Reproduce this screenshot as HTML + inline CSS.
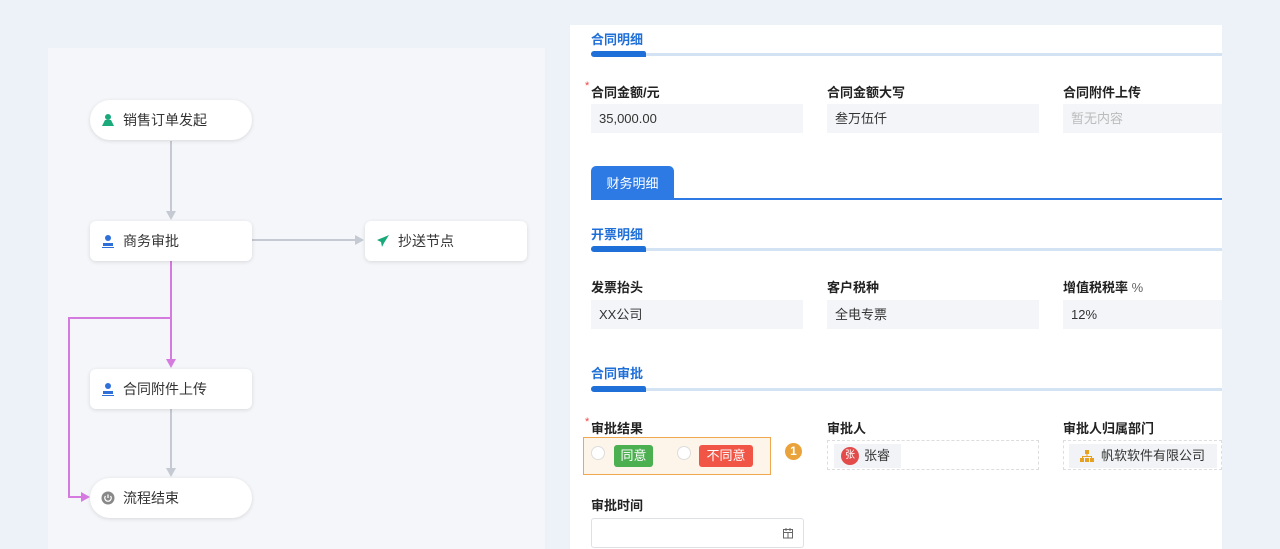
<!DOCTYPE html><html><head><meta charset="utf-8"><style>
*{margin:0;padding:0;box-sizing:border-box}
body{width:1280px;height:549px;overflow:hidden;background:#edf2f9;font-family:"Liberation Sans","Noto Sans CJK SC",sans-serif;position:relative;font-size:14px;color:#333}
.a{position:absolute}
.node{position:absolute;background:#fff;box-shadow:0 1px 4px rgba(0,0,0,.12);border-radius:6px;display:flex;align-items:center;padding-left:11px;font-size:14px;color:#333;width:162px;height:40px}
.node svg{margin-right:8px}
.pill{border-radius:20px}
.st{position:absolute;left:591px;color:#1f6fd8;font-weight:bold;font-size:13px}
.bar{position:absolute;left:591px;width:631px;height:3px;background:#d4e3f4}
.bar:before{content:"";position:absolute;left:0;top:-2px;width:55px;height:6px;background:#1f6fd8;border-radius:4px 3px 0 4px}
.lb{position:absolute;font-weight:bold;font-size:13px;color:#222}
.lb i{color:#e44;font-style:normal;font-weight:normal;position:absolute;left:-6px;top:-2px;font-size:11px}
.in{position:absolute;background:#f3f5f8;height:29px;font-size:13px;padding-left:8px;line-height:29px;color:#333}
</style></head><body>
<div class="a" style="left:48px;top:48px;width:497px;height:501px;background:#f4f6f9"></div>
<svg class="a" style="left:0;top:0" width="560" height="549">
<g stroke="#c5c9d2" stroke-width="2" fill="none"><path d="M171 141V212"/><path d="M252 240H356"/><path d="M171 409V470"/></g>
<g fill="#c5c9d2"><path d="M166 211h10l-5 9z"/><path d="M355 235v10l9-5z"/><path d="M166 468h10l-5 9z"/></g>
<g stroke="#d57be0" stroke-width="2" fill="none"><path d="M171 261V360"/><path d="M171 318H69V497H82"/></g>
<g fill="#d57be0"><path d="M166 359h10l-5 9z"/><path d="M81 492v10l9-5z"/></g>
</svg>
<div class="node pill" style="left:90px;top:100px"><svg width="14" height="14" viewBox="0 0 14 14"><circle cx="7" cy="4" r="3" fill="#19a97b"/><path d="M1 13l3-6h6l3 6z" fill="#19a97b"/></svg>销售订单发起</div>
<div class="node" style="left:90px;top:221px"><svg width="14" height="14" viewBox="0 0 14 14"><circle cx="7" cy="4" r="3" fill="#2f6fd8"/><path d="M2 9h10v3H2z" fill="#2f6fd8"/><path d="M1 13h12v1H1z" fill="#2f6fd8"/></svg>商务审批</div>
<div class="node" style="left:365px;top:221px"><svg width="14" height="14" viewBox="0 0 14 14"><path d="M13 1L1 6l4 2 1 5 2-4z" fill="#19a97b"/></svg>抄送节点</div>
<div class="node" style="left:90px;top:369px"><svg width="14" height="14" viewBox="0 0 14 14"><circle cx="7" cy="4" r="3" fill="#2f6fd8"/><path d="M2 9h10v3H2z" fill="#2f6fd8"/><path d="M1 13h12v1H1z" fill="#2f6fd8"/></svg>合同附件上传</div>
<div class="node pill" style="left:90px;top:478px"><svg width="14" height="14" viewBox="0 0 14 14"><circle cx="7" cy="7" r="6.5" fill="#888"/><path d="M4.5 5a3.2 3.2 0 1 0 5 0M7 3.5v3.5" stroke="#fff" stroke-width="1.3" fill="none"/></svg>流程结束</div>

<div class="a" style="left:570px;top:25px;width:652px;height:524px;background:#fff"></div>
<div class="st" style="top:29px">合同明细</div><div class="bar" style="top:53px"></div>
<div class="lb" style="left:591px;top:82px"><i>*</i>合同金额/元</div>
<div class="lb" style="left:827px;top:82px">合同金额大写</div>
<div class="lb" style="left:1063px;top:82px">合同附件上传</div>
<div class="in" style="left:591px;top:104px;width:212px">35,000.00</div>
<div class="in" style="left:827px;top:104px;width:212px">叁万伍仟</div>
<div class="in" style="left:1063px;top:104px;width:159px;color:#bbb">暂无内容</div>
<div class="a" style="left:591px;top:166px;width:83px;height:34px;background:#2d7ae5;border-radius:5px 5px 0 0;color:#fff;font-size:13px;line-height:36px;text-align:center">财务明细</div>
<div class="a" style="left:591px;top:198px;width:631px;height:2px;background:#2d7ae5"></div>
<div class="st" style="top:224px">开票明细</div><div class="bar" style="top:248px"></div>
<div class="lb" style="left:591px;top:277px">发票抬头</div>
<div class="lb" style="left:827px;top:277px">客户税种</div>
<div class="lb" style="left:1063px;top:277px">增值税税率 <span style="font-weight:normal;color:#666">%</span></div>
<div class="in" style="left:591px;top:300px;width:212px">XX公司</div>
<div class="in" style="left:827px;top:300px;width:212px">全电专票</div>
<div class="in" style="left:1063px;top:300px;width:159px">12%</div>
<div class="st" style="top:363px">合同审批</div><div class="bar" style="top:388px"></div>
<div class="lb" style="left:591px;top:418px"><i>*</i>审批结果</div>
<div class="lb" style="left:827px;top:418px">审批人</div>
<div class="lb" style="left:1063px;top:418px">审批人归属部门</div>
<div class="a" style="left:583px;top:437px;width:188px;height:38px;border:1.5px solid #f0a850;background:#fdf5ea"></div>
<div class="a" style="left:591px;top:446px;width:14px;height:14px;border-radius:50%;border:1px solid #ddd;background:#fff"></div>
<div class="a" style="left:614px;top:445px;width:39px;height:22px;background:#4caf50;border-radius:3px;color:#fff;font-size:13px;line-height:22px;text-align:center">同意</div>
<div class="a" style="left:677px;top:446px;width:14px;height:14px;border-radius:50%;border:1px solid #ddd;background:#fff"></div>
<div class="a" style="left:699px;top:445px;width:54px;height:22px;background:#f05545;border-radius:3px;color:#fff;font-size:13px;line-height:22px;text-align:center">不同意</div>
<div class="a" style="left:785px;top:443px;width:17px;height:17px;border-radius:50%;background:#eaa33a;color:#fff;font-size:12px;font-weight:bold;text-align:center;line-height:17px">1</div>
<div class="a" style="left:827px;top:440px;width:212px;height:30px;border:1px dashed #ddd"></div>
<div class="a" style="left:834px;top:444px;width:67px;height:24px;background:#f1f3f6;font-size:13px;line-height:24px;padding-left:30px">张睿</div>
<div class="a" style="left:841px;top:447px;width:18px;height:18px;border-radius:50%;background:#e34b4b;color:#fff;font-size:10px;text-align:center;line-height:18px">张</div>
<div class="a" style="left:1063px;top:440px;width:159px;height:30px;border:1px dashed #ddd"></div>
<div class="a" style="left:1069px;top:444px;width:148px;height:24px;background:#f1f3f6;font-size:13px;line-height:24px;padding-left:32px">帆软软件有限公司</div>
<svg class="a" style="left:1080px;top:449px" width="14" height="14" viewBox="0 0 14 14" fill="#e8a020"><rect x="5" y="1" width="4" height="4"/><rect x="0" y="9" width="4" height="4"/><rect x="5" y="9" width="4" height="4"/><rect x="10" y="9" width="4" height="4"/><path d="M6.5 5h1v2h4.5v2h-1V8H3v1H2V7h4.5z"/></svg>
<div class="lb" style="left:591px;top:495px">审批时间</div>
<div class="a" style="left:591px;top:518px;width:213px;height:30px;border:1px solid #dde0e5;border-radius:3px"></div>
<svg class="a" style="left:782px;top:527px" width="12" height="12" viewBox="0 0 12 12" fill="none" stroke="#666"><rect x="1.5" y="2.5" width="9" height="8.5"/><path d="M1.5 5.5h9M4 1v3M8 1v3M6 5.5v5.5"/></svg>
</body></html>
